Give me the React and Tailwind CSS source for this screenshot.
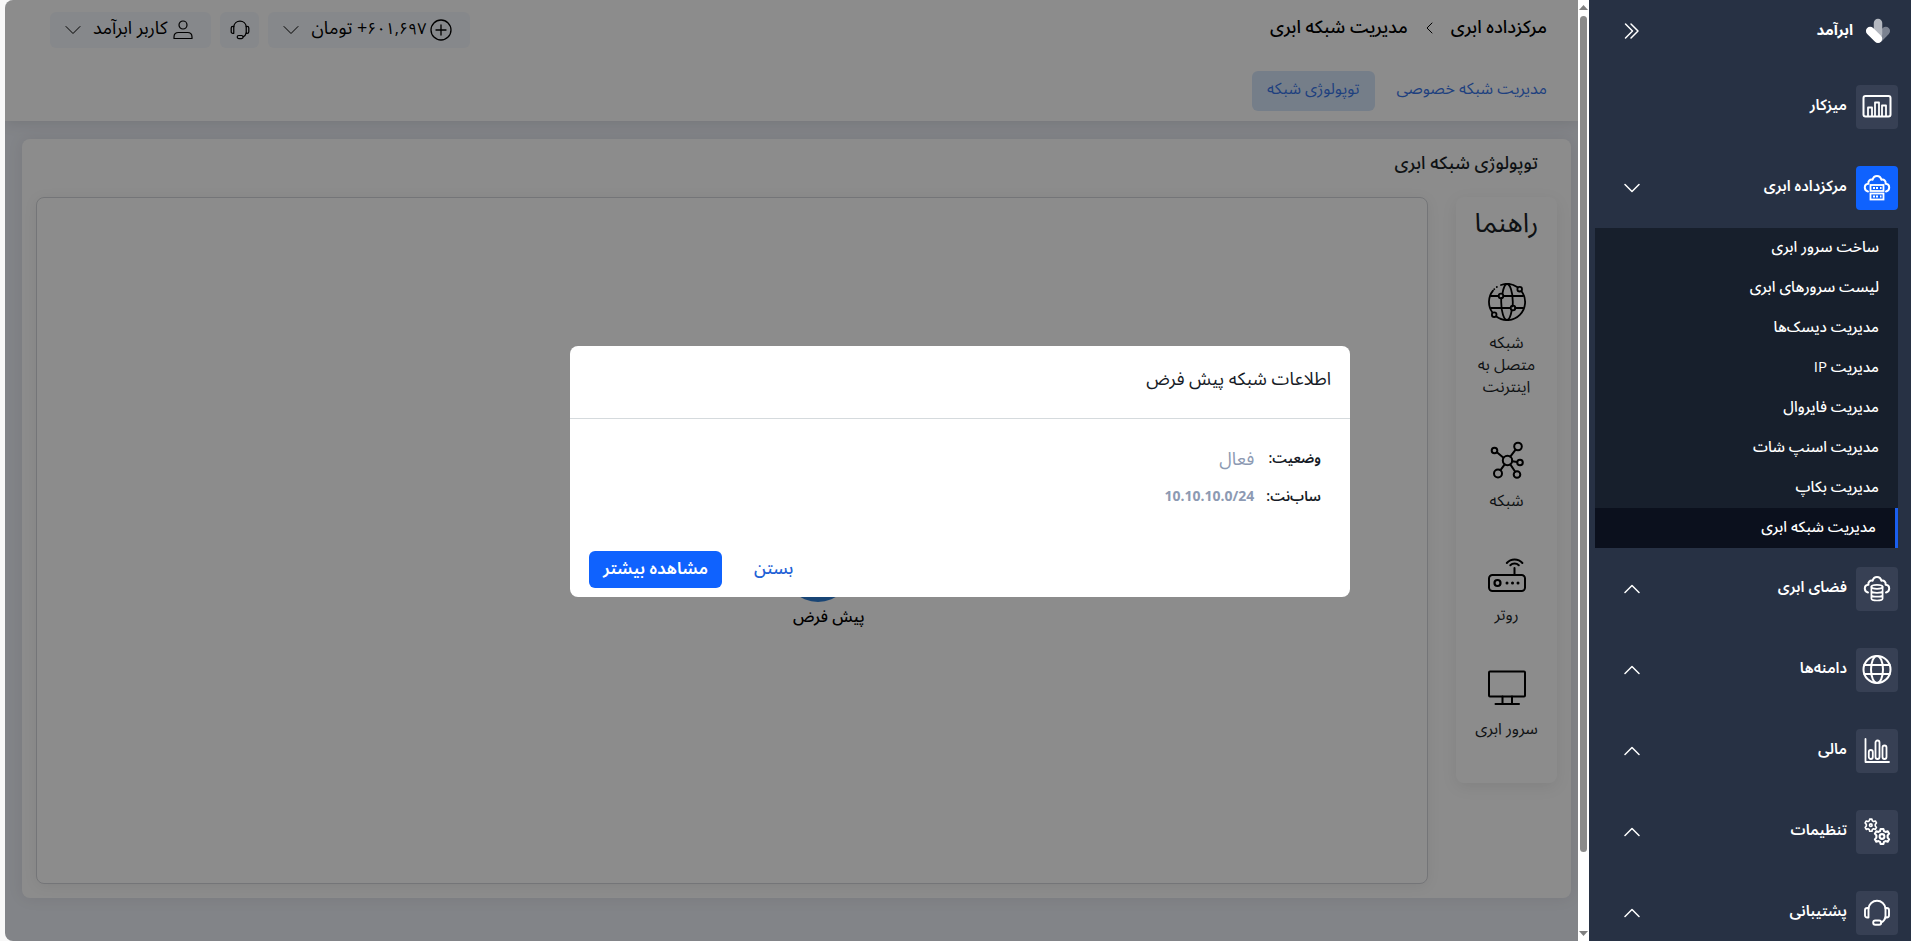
import React, { useState } from 'react';
import clsx from 'clsx';

const svgProps = { fill: 'none', stroke: 'currentColor', strokeLinecap: 'round', strokeLinejoin: 'round' };

const LogoIcon = () => (
    <svg width="26" height="26" viewBox="0 0 26 26" fill="none" strokeLinecap="round" strokeWidth="8.500" aria-hidden="true">
        <path d="M20.800 13L14 20" stroke="#7b8290" />
        <path d="M13 5V16" stroke="#b4b8c0" />
        <path d="M5.200 13L13 20.700" stroke="#fff" />
    </svg>
);

const DashboardIcon = () => (
    <svg width="30" height="30" viewBox="0 0 30 30" {...svgProps} strokeWidth="2" aria-hidden="true">
        <rect x="1.500" y="4" width="27" height="20.500" rx="2" />
        <path strokeWidth="1.800" d="M6 24v-8.500h4V24M13 24V10.500h4V24M20 24V13.500h4V24" />
    </svg>
);

const CloudPath = () => (
    <path d="M6 18.500C4 18 2.800 16.500 2.800 14.600c0-2.200 1.500-3.800 3.600-3.900C5.900 8 8 6 10.600 6.700 11.200 4.500 12.900 3 15 3s3.800 1.500 4.400 3.700c2.600-.7 4.700 1.300 4.200 4 2.100.1 3.600 1.700 3.600 3.900 0 1.900-1.200 3.400-3.200 3.900" />
);

const DatacenterIcon = () => (
    <svg width="30" height="30" viewBox="0 0 30 30" {...svgProps} strokeWidth="2" aria-hidden="true">
        <CloudPath />
        <g strokeWidth="1.800" strokeLinecap="butt" strokeLinejoin="miter">
            <rect x="8.500" y="12" width="13" height="6" />
            <rect x="8.500" y="20.500" width="13" height="6" />
            <path d="M11 15h2M14 15h2M18 15h1.500M11 23.500h2M14 23.500h2M18 23.500h1.500" />
        </g>
    </svg>
);

const StorageIcon = () => (
    <svg width="30" height="30" viewBox="0 0 30 30" {...svgProps} strokeWidth="2" aria-hidden="true">
        <CloudPath />
        <ellipse cx="15" cy="12.800" rx="5.600" ry="2" strokeWidth="1.700" />
        <path strokeWidth="1.700" d="M9.400 12.800v11.700c0 1.200 2.500 2 5.600 2s5.600-.8 5.600-2V12.800M9.400 16.800c0 1.200 2.500 2 5.600 2s5.600-.8 5.600-2M9.400 20.700c0 1.200 2.500 2 5.600 2s5.600-.8 5.600-2" />
    </svg>
);

const GlobeIcon = () => (
    <svg width="30" height="30" viewBox="0 0 30 30" {...svgProps} strokeWidth="2" aria-hidden="true">
        <circle cx="15" cy="14.500" r="13.500" />
        <ellipse cx="15" cy="14.500" rx="6" ry="13.500" />
        <path d="M2.300 10h25.400M2.300 19h25.400" />
    </svg>
);

const FinanceIcon = () => (
    <svg width="30" height="30" viewBox="0 0 30 30" {...svgProps} strokeWidth="1.800" aria-hidden="true">
        <path d="M3.500 3v23h23.500" />
        <rect x="6.800" y="14" width="4" height="9" rx="2" />
        <rect x="13.500" y="4.500" width="4" height="18.500" rx="2" />
        <rect x="20.500" y="9.500" width="4" height="13.500" rx="2" />
    </svg>
);

const GearPath = () => (
    <path d="M-1.300-7h2.600l.5 2 1.500.8 2-.7 1.300 2.300L5.200-1v2l1.400 1.600-1.300 2.300-2-.7-1.500.8-.5 2h-2.600l-.5-2-1.500-.8-2 .7-1.300-2.300L-5.200 1v-2l-1.400-1.600 1.300-2.300 2 .7 1.500-.8z" />
);

const SettingsIcon = () => (
    <svg width="30" height="30" viewBox="0 0 30 30" {...svgProps} strokeWidth="1.900" aria-hidden="true">
        <g transform="translate(8.800 8.200) scale(.86)">
            <GearPath />
            <circle r="1.500" />
        </g>
        <g transform="translate(20 19.500) scale(1.080)">
            <GearPath />
            <circle r="2.200" />
        </g>
    </svg>
);

const HeadsetIcon = ({ size = 30, width = 1.9 }) => (
    <svg width={size} height={size} viewBox="0 0 30 30" {...svgProps} strokeWidth={width} aria-hidden="true">
        <path d="M6.500 10.500C7 6 10.500 2.800 15 2.800s8 3.200 8.500 7.700M23.500 19c-.5 2.500-2 4.300-4.200 5.300" />
        <path d="M6.500 10H5.300c-1.500 0-2.300 1-2.300 2.300v5C3 18.600 3.800 19.500 5.300 19.500h1.200zM23.500 10h1.200c1.500 0 2.300 1 2.300 2.300v5c0 1.300-.8 2.200-2.300 2.200h-1.200z" />
        <rect x="11.200" y="22.500" width="8" height="4.300" rx="2.100" />
    </svg>
);

const Chevron = ({ up = false, width = 1.5 }) => (
    <svg width="16" height="10" viewBox="0 0 16 10" {...svgProps} strokeWidth={width} aria-hidden="true">
        <path d={up ? 'M1 8.500L8 1.500l7 7' : 'M1 1.500l7 7 7-7'} />
    </svg>
);

const InternetIcon = () => (
    <svg width="38" height="38" viewBox="0 0 38 38" {...svgProps} strokeWidth="1.800" aria-hidden="true">
        <path d="M13 2A18 18 0 0 1 29.600 4.300M33.500 8.300A18 18 0 0 1 8.300 33.500M4.400 29.500A18 18 0 0 1 5 7.600" />
        <path d="M6.200 6.200l.1-.1M8.800 4l.1-.1" />
        <path d="M14.500 10.300C15.500 4.800 17 1 19 1c3 0 5.800 8 5.800 18 0 1.500 0 3-.2 4.300M23.700 27.500C22.700 33 21 37 19 37c-3 0-5.800-8-5.800-18 0-1.500 0-2.800.1-4" />
        <path d="M3 13h7.500M15.500 13H35M3 25h19M27 25h8" />
        <circle cx="13" cy="13" r="2.300" />
        <circle cx="25" cy="25" r="2.300" />
        <circle cx="31.700" cy="6.200" r="2.300" />
        <circle cx="6.200" cy="31.700" r="2.300" />
    </svg>
);

const NetworkIcon = () => (
    <svg width="38" height="38" viewBox="0 0 38 38" {...svgProps} strokeWidth="2" aria-hidden="true">
        <circle cx="19.500" cy="19.500" r="4.700" />
        <circle cx="30" cy="5.500" r="3.800" />
        <circle cx="6.500" cy="9.500" r="2.800" />
        <circle cx="32" cy="21.500" r="2.800" />
        <circle cx="10" cy="32.500" r="4" />
        <circle cx="29" cy="33.500" r="3.300" />
        <path d="M22.300 15.700l5.300-7M15.500 16.700l-6.600-5.500M24.200 20.300l5 .8M16.700 23.400l-4.200 5.700M22.300 23.400l4.900 7.300" />
    </svg>
);

const RouterIcon = () => (
    <svg width="38" height="38" viewBox="0 0 38 38" {...svgProps} strokeWidth="2" aria-hidden="true">
        <rect x="1" y="20" width="36" height="16" rx="3.500" />
        <circle cx="9.500" cy="28" r="3" strokeWidth="2.200" />
        <path strokeWidth="3" d="M19 28h.01M24.500 28h.01M30 28h.01" />
        <path d="M26.500 20v-7M18.800 8a10.300 10.300 0 0 1 15.600 0M22.300 10.300a6 6 0 0 1 8.500 0" />
    </svg>
);

const MonitorIcon = () => (
    <svg width="38" height="38" viewBox="0 0 38 38" {...svgProps} strokeWidth="2" aria-hidden="true">
        <rect x="1" y="2.500" width="36" height="25" rx="1" />
        <path d="M14.500 27.500V35M24 27.500V35M7.500 35h23.500" />
    </svg>
);

const menu = [
    { label: 'میزکار', icon: DashboardIcon },
    {
        label: 'مرکزداده ابری',
        icon: DatacenterIcon,
        children: [
            'ساخت سرور ابری',
            'لیست سرورهای ابری',
            'مدیریت دیسک‌ها',
            'مدیریت IP',
            'مدیریت فایروال',
            'مدیریت اسنپ شات',
            'مدیریت بکاپ',
            'مدیریت شبکه ابری',
        ],
    },
    { label: 'فضای ابری', icon: StorageIcon, collapsed: true },
    { label: 'دامنه‌ها', icon: GlobeIcon, collapsed: true },
    { label: 'مالی', icon: FinanceIcon, collapsed: true },
    { label: 'تنظیمات', icon: SettingsIcon, collapsed: true },
    { label: 'پشتیبانی', icon: HeadsetIcon, collapsed: true },
];

const guide = [
    { label: 'شبکه متصل به اینترنت', icon: InternetIcon },
    { label: 'شبکه', icon: NetworkIcon },
    { label: 'روتر', icon: RouterIcon },
    { label: 'سرور ابری', icon: MonitorIcon },
];

const Sidebar = () => (
    <aside className="relative z-20 w-[322px] shrink-0 overflow-hidden bg-[#273144] text-white">
        <div className="flex h-[62px] items-center pr-5 pl-[35px]">
            <LogoIcon />
            <span className="mr-3 pb-1 text-[15px] font-bold">ابرآمد</span>
            <button type="button" aria-label="بستن منو" className="mr-auto">
                <svg width="16" height="18" viewBox="0 0 16 18" {...svgProps} strokeWidth="1.500" aria-hidden="true">
                    <path d="M1.500 2l7 7-7 7M7 2l7 7-7 7" />
                </svg>
            </button>
        </div>
        <nav className="pt-1">
            {menu.map(({ label, icon: Icon, children, collapsed }) => (
                <div key={label}>
                    <a href="#" className="flex h-[81px] items-center pr-[13px] pl-[35px]">
                        <span
                            className={clsx(
                                'flex h-11 w-[42px] items-center justify-center rounded',
                                children ? 'bg-[#0f62fe]' : 'bg-[#374054]'
                            )}
                        >
                            <Icon />
                        </span>
                        <span className="mr-[9px] pb-1 text-[15px] font-semibold">{label}</span>
                        {(children || collapsed) && (
                            <span className="mr-auto">
                                <Chevron up={collapsed} />
                            </span>
                        )}
                    </a>
                    {children && (
                        <ul className="mr-[13px] ml-1.5 bg-[#171f2c]">
                            {children.map((item, idx) => (
                                <li key={item}>
                                    <a
                                        href="#"
                                        className={clsx(
                                            'flex h-10 items-center pr-[19px] pb-[3px] text-[15px] font-medium',
                                            idx === children.length - 1 && 'border-r-3 border-[#1a5ff0] bg-[#0b101d]'
                                        )}
                                    >
                                        {item}
                                    </a>
                                </li>
                            ))}
                        </ul>
                    )}
                </div>
            ))}
        </nav>
    </aside>
);

const ScrollTrack = () => (
    <div className="relative z-20 flex w-[11px] shrink-0 flex-col items-center justify-between bg-white py-1" aria-hidden="true">
        <svg width="9" height="6" viewBox="0 0 9 6" fill="#7f7f7f"><path d="M0 6l4.500-5L9 6z" /></svg>
        <div className="my-1.5 flex w-[7px] grow flex-col">
            <div className="h-[92%] rounded-full bg-[#8a8a8a]"></div>
        </div>
        <svg width="9" height="6" viewBox="0 0 9 6" fill="#7f7f7f"><path d="M0 0l4.500 5L9 0z" /></svg>
    </div>
);

const Header = () => (
    <header className="relative bg-white pr-[31px] pl-[45px] shadow-[0_2px_14px_rgba(0,0,0,0.1)]">
        <div className="flex h-[60px] items-center text-black">
            <div className="flex items-center gap-[18px] pb-2 text-lg font-medium">
                <a href="#">مرکزداده ابری</a>
                <svg width="7" height="12" viewBox="0 0 7 12" {...svgProps} strokeWidth="1" className="mt-1" aria-hidden="true">
                    <path d="M6 1L1 6l5 5" />
                </svg>
                <a href="#">مدیریت شبکه ابری</a>
            </div>
            <div className="mr-auto flex gap-[9px] text-lg">
                <button type="button" className="flex h-9 items-center rounded-md bg-[#f5f8fd] pr-[18px] pl-[15px]">
                    <svg width="22" height="22" viewBox="0 0 22 22" {...svgProps} strokeWidth="1.300" aria-hidden="true">
                        <circle cx="11" cy="11" r="10" />
                        <path d="M11 6v10M6 11h10" />
                    </svg>
                    <span className="mr-1 ml-3 pb-1.5"><span className="text-base">۶۰۱,۶۹۷</span>+ تومان</span>
                    <Chevron width={1} />
                </button>
                <button type="button" aria-label="پشتیبانی" className="flex h-9 w-[39px] items-center justify-center rounded-md bg-[#f5f8fd]">
                    <HeadsetIcon size={22} width={1.7} />
                </button>
                <button type="button" className="flex h-9 items-center rounded-md bg-[#f5f8fd] pr-[18px] pl-[15px]">
                    <svg width="20" height="20" viewBox="0 0 20 20" {...svgProps} strokeWidth="1.200" aria-hidden="true">
                        <circle cx="10" cy="5" r="4" />
                        <path d="M1 18.500v-1.500c0-3 2-4.500 4.500-4.500h9c2.500 0 4.500 1.500 4.500 4.500v1.500z" />
                    </svg>
                    <span className="mr-1.5 ml-3 pb-1.5">کاربر ابرآمد</span>
                    <Chevron width={1} />
                </button>
            </div>
        </div>
        <div className="flex h-[61px] items-center text-base text-[#3a76e8]">
            <a href="#" className="ml-[22px] pb-1.5">مدیریت شبکه خصوصی</a>
            <a href="#" className="flex h-10 items-center rounded-md bg-[#d6e6fa] px-[15px] pb-1.5">توپولوژی شبکه</a>
        </div>
    </header>
);

const Topology = () => (
    <section className="mt-[18px] mr-[7px] ml-[17px] flex h-[759px] flex-col rounded-lg bg-white px-3.5 pb-3.5 text-[#1b1f27] shadow-[0_0_16px_rgba(0,0,0,0.08)]">
        <h2 className="flex h-[58px] items-center pr-[19px] pb-3 text-lg font-medium">توپولوژی شبکه ابری</h2>
        <div className="flex grow items-start gap-7">
            <div className="flex h-[586px] w-[101px] shrink-0 flex-col items-center rounded-lg bg-white shadow-[0_4px_16px_rgba(0,0,0,0.08)]">
                <h3 className="mt-1.5 mb-[42px] text-[27px] leading-[38px]">راهنما</h3>
                <ul className="flex flex-col gap-11 text-center text-base">
                    {guide.map(({ label, icon: Icon }) => (
                        <li key={label} className="flex w-[66px] flex-col items-center">
                            <span className="text-black"><Icon /></span>
                            <span className="mt-2.5 leading-[22px]">{label}</span>
                        </li>
                    ))}
                </ul>
            </div>
            <div className="relative grow self-stretch rounded-lg border border-[#d4d6da] bg-white shadow-[0_2px_14px_rgba(0,0,0,0.07)]">
                <div className="absolute top-[334px] left-[746px] size-[70px] rounded-full bg-[#2f7fd6]"></div>
                <span className="absolute top-[406px] left-[756px] text-base font-medium text-black">پیش فرض</span>
            </div>
        </div>
    </section>
);

const NetworkModal = ({ onClose }) => (
    <div className="fixed inset-0 z-30 flex items-center justify-center pt-0.5 pl-[9px]">
        <div role="dialog" aria-modal="true" aria-labelledby="modal-title" className="w-[780px] rounded-lg bg-white text-[#161b26]">
            <h2 id="modal-title" className="flex h-[73px] items-center border-b border-[#d5dadd] px-[19px] pb-2 text-lg">
                اطلاعات شبکه پیش فرض
            </h2>
            <dl className="grid h-[118px] grid-cols-[max-content_1fr] content-start items-center gap-x-3 px-[29px] pt-5">
                <dt className="text-sm leading-[38px] font-semibold">وضعیت:</dt>
                <dd className="text-lg leading-[38px] text-[#8d9ab3]">فعال</dd>
                <dt className="text-sm leading-[38px] font-semibold">ساب‌نت:</dt>
                <dd className="text-sm leading-[38px] font-bold text-[#8d9ab3]">10.10.10.0/24</dd>
            </dl>
            <div className="flex items-center justify-end gap-6 px-[19px] pt-3.5 pb-[9px]">
                <button type="button" onClick={onClose} className="px-2 pb-1 text-[17px] font-medium text-[#1f62d6]">بستن</button>
                <button type="button" className="h-[37px] rounded-md bg-[#0f62fe] px-3.5 pb-1 text-[17px] font-semibold text-white">
                    مشاهده بیشتر
                </button>
            </div>
        </div>
    </div>
);

const App = () => {
    const [open, setOpen] = useState(true);

    return (
        <div
            dir="rtl"
            className="flex h-screen overflow-hidden bg-[#f8f8f8] pl-[5px] font-['Open_Sans','Noto_Sans_Arabic','DejaVu_Sans',sans-serif]"
        >
            <Sidebar />
            <ScrollTrack />
            <main className="relative min-w-0 grow overflow-hidden rounded-l-lg bg-[#edf0f7]">
                <Header />
                <Topology />
                {open && <div className="absolute inset-0 bg-black/45"></div>}
            </main>
            {open && <NetworkModal onClose={() => setOpen(false)} />}
        </div>
    );
};

export default App;
